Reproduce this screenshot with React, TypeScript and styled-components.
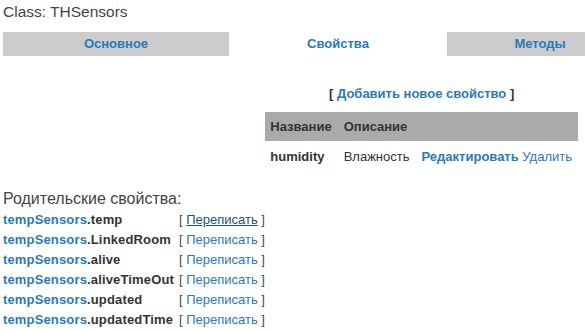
import React from 'react';
import styled, { createGlobalStyle } from 'styled-components';

const GlobalStyle = createGlobalStyle`
  html, body {
    margin: 0;
    padding: 0;
    background: #ffffff;
  }
  body {
    font-family: "Liberation Sans", Arial, sans-serif;
    color: #333333;
    overflow: hidden;
  }
`;

const LINK = '#2a7ab8';

const Page = styled.div`
  width: 582px;
  padding: 3px 0 0 3px;
`;

const Title = styled.h1`
  margin: 0;
  font-size: 15.5px;
  line-height: 18px;
  font-weight: normal;
  color: #444444;
`;

const TabBar = styled.div`
  display: flex;
  margin-top: 11px;
  height: 24px;
  overflow: hidden;
`;

const Tab = styled.a<{ $active?: boolean; $width: number }>`
  flex: 0 0 ${(p) => p.$width}px;
  background: ${(p) => (p.$active ? '#ffffff' : '#cccccc')};
  color: ${LINK};
  font-size: 13px;
  font-weight: bold;
  line-height: 24px;
  text-align: center;
  text-decoration: none;
`;

const PropsPanel = styled.div`
  display: flex;
  justify-content: flex-end;
  padding-right: 7px;
`;

const PanelColumn = styled.div`
  display: flex;
  flex-direction: column;
  align-items: center;
`;

const AddLine = styled.div`
  margin-top: 30px;
  font-size: 13px;
  line-height: 16px;
  font-weight: bold;
  color: #333333;
`;

const Link = styled.a<{ $bold?: boolean; $hover?: boolean }>`
  color: ${(p) => (p.$hover ? '#23527c' : LINK)};
  font-weight: ${(p) => (p.$bold ? 'bold' : 'normal')};
  text-decoration: ${(p) => (p.$hover ? 'underline' : 'none')};
  cursor: pointer;
`;

const PropsTable = styled.table`
  margin-top: 10px;
  border-collapse: collapse;
  font-size: 13px;
  line-height: 15px;
`;

const HeadCell = styled.th`
  background: #aaaaaa;
  padding: 7px 6px;
  text-align: left;
  font-weight: bold;
  color: #333333;
  white-space: nowrap;

  &:first-child {
    padding-left: 5px;
  }
`;

const Cell = styled.td<{ $bold?: boolean }>`
  padding: 8px 6px;
  font-weight: ${(p) => (p.$bold ? 'bold' : 'normal')};
  color: #333333;
  white-space: nowrap;

  &:first-child {
    padding-left: 5px;
  }
`;

const Heading = styled.h2`
  margin: 18px 0 0;
  font-size: 16px;
  line-height: 18px;
  font-weight: normal;
  color: #444444;
`;

const ParentTable = styled.table`
  margin-top: 1px;
  border-collapse: collapse;
  font-size: 13px;
  line-height: 15px;
`;

const ParentRow = styled.tr`
  height: 20px;
`;

const NameCell = styled.td`
  padding: 0 5px 0 0;
  font-weight: bold;
  color: #333333;
  white-space: nowrap;
  letter-spacing: 0.15px;
`;

const ActionCell = styled.td`
  padding: 0;
  color: #4a4458;
  white-space: nowrap;
`;

const parentProps = ['temp', 'LinkedRoom', 'alive', 'aliveTimeOut', 'updated', 'updatedTime'];

const App: React.FC = () => {
  return (
    <Page>
      <GlobalStyle />
      <Title>Class: THSensors</Title>

      <TabBar>
        <Tab $width={226}>Основное</Tab>
        <Tab $width={218} $active>
          Свойства
        </Tab>
        <Tab $width={186}>Методы</Tab>
      </TabBar>

      <PropsPanel>
        <PanelColumn>
          <AddLine>
            [ <Link $bold>Добавить новое свойство</Link> ]
          </AddLine>
          <PropsTable>
            <thead>
              <tr>
                <HeadCell>Название</HeadCell>
                <HeadCell>Описание</HeadCell>
                <HeadCell />
              </tr>
            </thead>
            <tbody>
              <tr>
                <Cell $bold>humidity</Cell>
                <Cell>Влажность</Cell>
                <Cell>
                  <Link $bold>Редактировать</Link> <Link>Удалить</Link>
                </Cell>
              </tr>
            </tbody>
          </PropsTable>
        </PanelColumn>
      </PropsPanel>

      <Heading>Родительские свойства:</Heading>
      <ParentTable>
        <tbody>
          {parentProps.map((name, i) => (
            <ParentRow key={name}>
              <NameCell>
                <Link $bold>tempSensors</Link>.{name}
              </NameCell>
              <ActionCell>
                [ <Link $hover={i === 0}>Переписать</Link> ]
              </ActionCell>
            </ParentRow>
          ))}
        </tbody>
      </ParentTable>
    </Page>
  );
};

export default App;
